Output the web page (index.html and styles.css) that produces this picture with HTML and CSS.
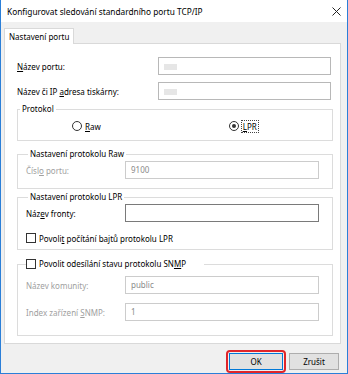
FILE: index.html
```html
<!DOCTYPE html>
<html lang="cs">
<head>
  <meta charset="UTF-8">
  <title>Konfigurovat sledování standardního portu TCP/IP</title>
  <link rel="stylesheet" href="styles.css">
</head>
<body>

<div class="window">
  <div class="titlebar">
    <span class="title">Konfigurovat sledování standardního portu TCP/IP</span>
    <svg class="close" width="9" height="9" viewBox="0 0 9 9">
      <path d="M0.5 0.5 L8.5 8.5 M8.5 0.5 L0.5 8.5" stroke="#222" stroke-width="1"/>
    </svg>
  </div>

  <div class="client">
    <div class="tabs">
      <div class="tab">Nastavení portu</div>
    </div>

    <div class="panel">
      <div class="row">
        <label><u>N</u>ázev portu:</label>
        <div class="input wide"><span class="redacted"></span></div>
      </div>
      <div class="row">
        <label>Název či IP <u>a</u>dresa tiskárny:</label>
        <div class="input wide"><span class="redacted"></span></div>
      </div>

      <fieldset class="group protocol">
        <legend>Protokol</legend>
        <div class="radios">
          <span class="radio"><span class="dot"></span><span><u>R</u>aw</span></span>
          <span class="radio checked"><span class="dot"></span><span class="focus"><u>L</u>PR</span></span>
        </div>
      </fieldset>

      <fieldset class="group raw disabled">
        <legend>Nastavení protokolu Raw</legend>
        <div class="row inner">
          <label>Čísl<u>o</u> portu:</label>
          <div class="input">9100</div>
        </div>
      </fieldset>

      <fieldset class="group lpr">
        <legend>Nastavení protokolu LPR</legend>
        <div class="row inner">
          <label>Náz<u>e</u>v fronty:</label>
          <div class="input active"></div>
        </div>
        <div class="check"><span class="box"></span><span>Povoli<u>t</u> počítání bajtů protokolu LPR</span></div>
      </fieldset>

      <fieldset class="group snmp">
        <legend><span class="check"><span class="box"></span><span>Povolit odesílání stavu protokolu SN<u>M</u>P</span></span></legend>
        <div class="row inner disabled">
          <label>Název komunity:</label>
          <div class="input">public</div>
        </div>
        <div class="row inner disabled">
          <label>Index zařízení <u>S</u>NMP:</label>
          <div class="input">1</div>
        </div>
      </fieldset>
    </div>

    <div class="buttons">
      <span class="highlight"><button class="default">OK</button></span>
      <button>Zrušit</button>
    </div>
  </div>
</div>

</body>
</html>
```

FILE: styles.css
```css
body {
  margin: 0;
  font-family: "Noto Sans", "Open Sans", sans-serif;
  font-size: 8px;
  color: #000;
  background: #fff;
}

.window {
  width: 346px;
  height: 373px;
  border: 1px solid #2b7fd8;
  border-top: none;
  display: flex;
  flex-direction: column;
}

.titlebar {
  flex-shrink: 0;
  height: 22px;
  background: #fff;
  display: flex;
  align-items: center;
  justify-content: space-between;
  padding: 1px 6px 0 6px;
  box-sizing: border-box;
}

.title {
  font-size: 8.3px;
}

.client {
  flex: 1;
  background: #f0f0f0;
  padding: 6px 6px 0 3px;
}

.tabs {
  display: flex;
  height: 15px;
}

.tab {
  background: #fff;
  border: 1px solid #d9d9d9;
  border-bottom: none;
  padding: 1px 4px 0 4px;
  line-height: 13px;
  margin-bottom: -1px;
  position: relative;
}

.panel {
  box-sizing: border-box;
  background: #fff;
  border: 1px solid #d9d9d9;
  height: 301px;
  padding: 13px 8px 0 12px;
}

.row {
  display: flex;
  align-items: center;
  margin-bottom: 7px;
}

.row label {
  width: 141px;
}

.input {
  height: 16px;
  border: 1px solid #cccccc;
  background: #fff;
  line-height: 16px;
  padding-left: 5px;
  color: #8a8a8a;
  width: 187px;
  box-sizing: content-box;
}

.input.wide {
  width: 166px;
  border-color: #b8b8b8;
}

.input.active {
  border-color: #7a7a7a;
}

.redacted {
  display: inline-block;
  width: 13px;
  height: 6px;
  background: #e6e6e6;
  vertical-align: middle;
}

.group {
  margin: 0 -1px 0 0;
  border: 1px solid #dcdcdc;
  padding: 0 12px 0 8px;
  min-width: 0;
}

.group legend {
  padding: 0 2px;
  margin-left: 2px;
  line-height: 12px;
}

.protocol {
  margin-top: -4px;
  padding: 5px 0 8px 0;
}

.radios {
  display: flex;
  align-items: center;
  padding-left: 54px;
  gap: 128px;
  height: 12px;
}

.radio {
  display: flex;
  align-items: center;
  gap: 3px;
}

.dot {
  width: 8px;
  height: 8px;
  border: 1px solid #333;
  border-radius: 50%;
  display: inline-flex;
  align-items: center;
  justify-content: center;
}

.checked .dot::after {
  content: "";
  width: 4px;
  height: 4px;
  border-radius: 50%;
  background: #333;
}

.focus {
  outline: 1px dotted #444;
  padding: 0 1px;
  line-height: 11px;
}

.disabled {
  color: #a0a0a0;
}

.group .inner label {
  width: 99px;
}

.group .inner {
  margin-bottom: 0;
}

.disabled .input {
  color: #8a8a8a;
}

.raw {
  margin-top: 7px;
  padding-top: 1px;
  padding-bottom: 9px;
}

.raw legend {
  color: #000;
}

.lpr {
  margin-top: 2px;
  padding-top: 1px;
  padding-bottom: 5px;
}

.check {
  display: flex;
  align-items: center;
  gap: 3px;
  height: 12px;
  margin-top: 10px;
}

.box {
  width: 8px;
  height: 8px;
  border: 1px solid #333;
  background: #fff;
}

.snmp {
  margin-top: 8px;
  padding-top: 0;
  padding-bottom: 14px;
}

.snmp legend {
  margin-left: 0;
  padding: 0 18px 0 0;
}

.snmp legend .check {
  margin-top: 0;
}

.snmp .inner {
  margin-top: 6px;
}

.snmp .inner + .inner {
  margin-top: 9px;
}

.buttons {
  display: flex;
  justify-content: flex-end;
  align-items: center;
  gap: 3px;
  padding: 6px 2px 0 0;
}

button {
  font-family: inherit;
  font-size: 8px;
  width: 50px;
  height: 17px;
  background: #e1e1e1;
  border: 1px solid #adadad;
  padding: 0;
}

button.default {
  width: 54px;
  border-color: #0078d7;
}

.highlight {
  display: inline-flex;
  padding: 1px;
  border: 2px solid #e0252a;
  border-radius: 4px;
}
```
